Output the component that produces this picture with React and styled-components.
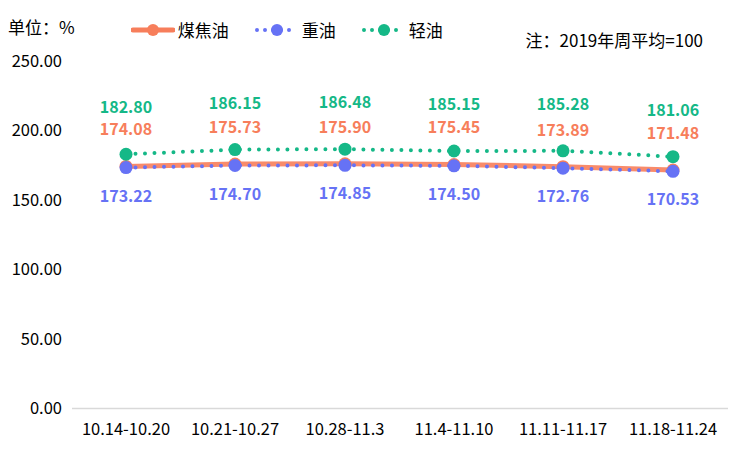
import React from "react";
import styled, { createGlobalStyle } from "styled-components";

const G = createGlobalStyle`
  body { margin: 0; background: #fff; font-family: "Noto Sans CJK SC", "Noto Sans", sans-serif; }
`;
const Page = styled.div`width: 737px; height: 449px; position: relative; overflow: hidden;`;
const Header = styled.div`
  display: flex; align-items: flex-start; height: 0; font-size: 17px; color: #000;
`;
const Unit = styled.div`margin: 16px 0 0 8px; line-height: 22px;`;
const Legend = styled.div`display: flex; gap: 26px; margin: 19px 0 0 56px; line-height: 22px;`;
const Item = styled.div`display: flex; align-items: center; gap: 3px;`;
const Note = styled.div`margin: 29px 0 0 auto; padding-right: 34px; line-height: 22px;`;

const X = [126, 235, 345, 454, 563, 673];
const yOf = (v) => 408 - v * 1.388;
const series = [
  { name: "煤焦油", color: "#f77e5b", data: [174.08, 175.73, 175.9, 175.45, 173.89, 171.48], off: -37, type: "solid" },
  { name: "重油", color: "#6672f5", data: [173.22, 174.7, 174.85, 174.5, 172.76, 170.53], off: 28, type: "dot" },
  { name: "轻油", color: "#15b887", data: [182.8, 186.15, 186.48, 185.15, 185.28, 181.06], off: -47, type: "dot" },
];
const cats = ["10.14-10.20", "10.21-10.27", "10.28-11.3", "11.4-11.10", "11.11-11.17", "11.18-11.24"];

function LegendIcon({ s }) {
  return (
    <svg width="44" height="14">
      {s.type === "solid" ? (
        <line x1="2" y1="7" x2="42" y2="7" stroke={s.color} strokeWidth="5" strokeLinecap="round" />
      ) : (
        <line x1="2" y1="7" x2="42" y2="7" stroke={s.color} strokeWidth="4" strokeDasharray="0 8" strokeLinecap="round" />
      )}
      <circle cx="22" cy="7" r="6" fill={s.color} />
    </svg>
  );
}

export default function App() {
  return (
    <Page>
      <G />
      <Header>
        <Unit>单位：%</Unit>
        <Legend>
          {series.map((s) => (
            <Item key={s.name}><LegendIcon s={s} />{s.name}</Item>
          ))}
        </Legend>
        <Note>注：2019年周平均=100</Note>
      </Header>
      <svg width="737" height="449" style={{ display: "block" }}>
        {[0, 50, 100, 150, 200, 250].map((v) => (
          <text key={v} x="62" y={yOf(v) + 6} textAnchor="end" fontSize="16.5" fill="#000">{v.toFixed(2)}</text>
        ))}
        <line x1="72" y1="408.5" x2="728" y2="408.5" stroke="#d9d9d9" strokeWidth="1.5" />
        {cats.map((c, i) => (
          <text key={c} x={X[i]} y="435" textAnchor="middle" fontSize="16.5" fill="#000">{c}</text>
        ))}
        {[series[0], series[2], series[1]].map((s) => {
          const pts = s.data.map((v, i) => `${X[i]},${yOf(v)}`).join(" ");
          return (
            <g key={s.name}>
              {s.type === "solid" ? (
                <polyline points={pts} fill="none" stroke={s.color} strokeWidth="5" strokeLinecap="round" opacity="0.9" />
              ) : (
                <polyline points={pts} fill="none" stroke={s.color} strokeWidth="4" strokeDasharray="0 9.5" strokeLinecap="round" />
              )}
              {s.data.map((v, i) => (
                <circle key={i} cx={X[i]} cy={yOf(v)} r="6.5" fill={s.color} />
              ))}
              {s.data.map((v, i) => (
                <text key={"t" + i} x={X[i]} y={yOf(v) + s.off + 6} textAnchor="middle" fontSize="16" fontWeight="bold" fill={s.color}>{v.toFixed(2)}</text>
              ))}
            </g>
          );
        })}
      </svg>
    </Page>
  );
}
